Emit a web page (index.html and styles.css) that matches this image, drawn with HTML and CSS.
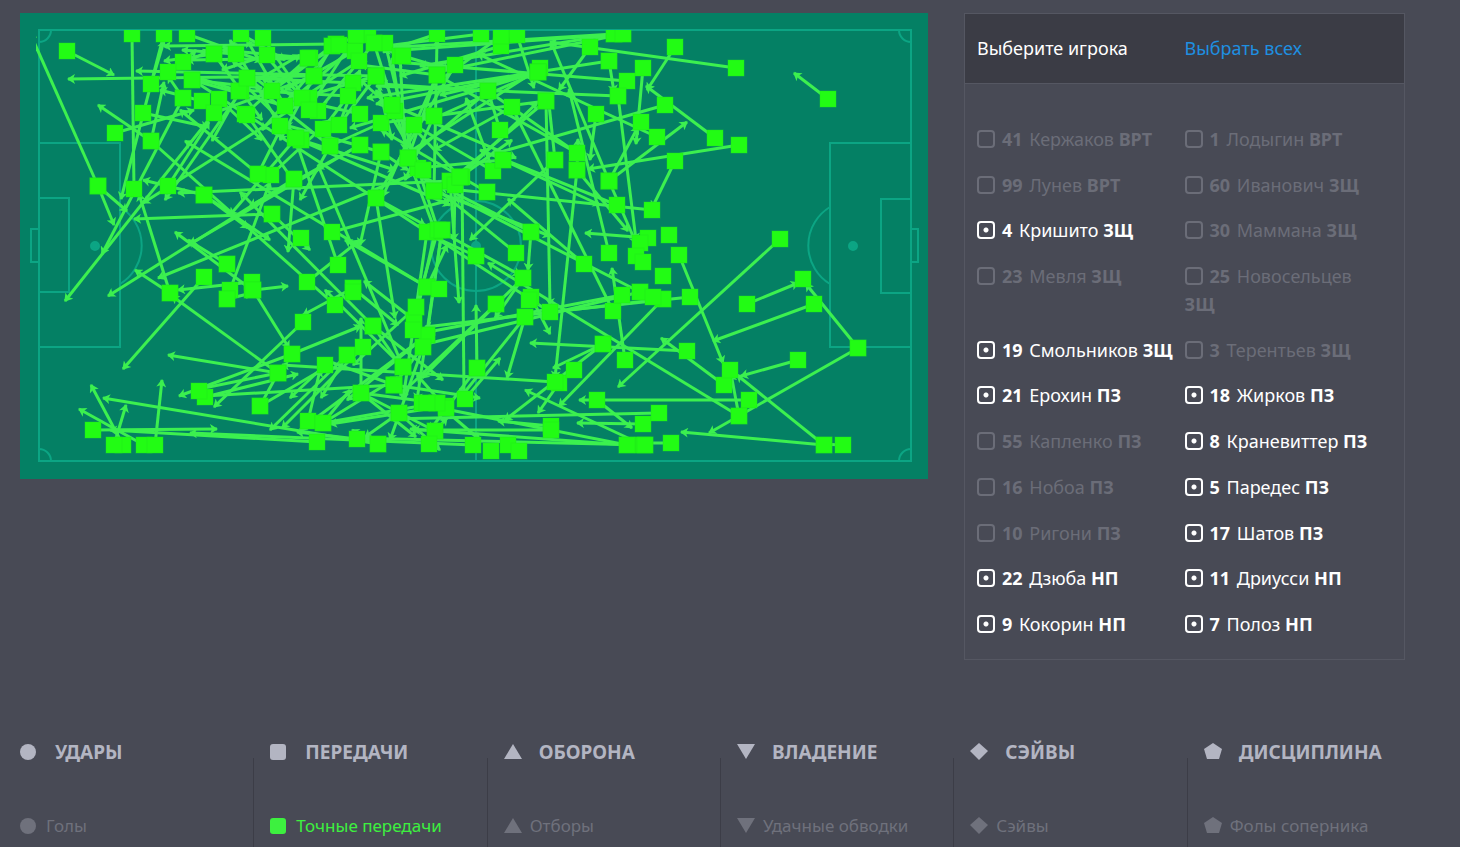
FILE: index.html
```html
<!DOCTYPE html>
<html lang="ru">
  <head>
    <meta charset="UTF-8" />
    <meta name="viewport" content="width=device-width, initial-scale=1.0" />
    <title>Точные передачи</title>
    <link rel="stylesheet" href="styles.css">
  </head>
  <body>

    <main class="match">
      <svg class="pitch" viewBox="20 13 908 466" role="img" aria-label="Карта передач">
        <defs>
          <clipPath id="field"><rect x="36" y="30" width="892" height="432" /></clipPath>
          <marker id="arrow" markerUnits="userSpaceOnUse" markerWidth="10" markerHeight="10" refX="8" refY="5" orient="auto">
            <path d="M1 0 L9 5 L1 10 L3 5 Z" fill="#3cf04f" />
          </marker>
        </defs>
        <g class="markings">
          <rect x="39" y="30" width="872" height="431" />
          <path d="M476 30V461" />
          <circle cx="476" cy="246" r="45" />
          <path d="M39 143H120V347H39M39 198H69V292H39M39 229H31V262H39" />
          <path d="M911 143H830V347H911M911 199H881V293H911M911 229H918V262H911" />
          <path d="M120 207A45 45 0 0 1 120 284M830 207A45 45 0 0 0 830 284" />
          <path d="M51 30A12 12 0 0 1 39 42M899 30A12 12 0 0 0 911 42M51 461A12 12 0 0 0 39 449M899 461A12 12 0 0 1 911 449" />
          <circle class="spot" cx="95" cy="246" r="4" />
          <circle class="spot" cx="476" cy="246" r="4" />
          <circle class="spot" cx="853" cy="246" r="4" />
        </g>
        <g id="passes" clip-path="url(#field)"></g>
      </svg>

      <section class="players">
        <header class="players-head">
          <h2>Выберите игрока</h2>
          <a href="#all">Выбрать всех</a>
        </header>
        <div class="players-list">
          <label><input type="checkbox"><b>41</b> Кержаков <b>ВРТ</b></label>
          <label><input type="checkbox"><b>1</b> Лодыгин <b>ВРТ</b></label>
          <label><input type="checkbox"><b>99</b> Лунев <b>ВРТ</b></label>
          <label><input type="checkbox"><b>60</b> Иванович <b>ЗЩ</b></label>
          <label><input type="checkbox" checked><b>4</b> Кришито <b>ЗЩ</b></label>
          <label><input type="checkbox"><b>30</b> Маммана <b>ЗЩ</b></label>
          <label><input type="checkbox"><b>23</b> Мевля <b>ЗЩ</b></label>
          <label><input type="checkbox"><b>25</b> Новосельцев <b>ЗЩ</b></label>
          <label><input type="checkbox" checked><b>19</b> Смольников <b>ЗЩ</b></label>
          <label><input type="checkbox"><b>3</b> Терентьев <b>ЗЩ</b></label>
          <label><input type="checkbox" checked><b>21</b> Ерохин <b>ПЗ</b></label>
          <label><input type="checkbox" checked><b>18</b> Жирков <b>ПЗ</b></label>
          <label><input type="checkbox"><b>55</b> Капленко <b>ПЗ</b></label>
          <label><input type="checkbox" checked><b>8</b> Краневиттер <b>ПЗ</b></label>
          <label><input type="checkbox"><b>16</b> Нобоа <b>ПЗ</b></label>
          <label><input type="checkbox" checked><b>5</b> Паредес <b>ПЗ</b></label>
          <label><input type="checkbox"><b>10</b> Ригони <b>ПЗ</b></label>
          <label><input type="checkbox" checked><b>17</b> Шатов <b>ПЗ</b></label>
          <label><input type="checkbox" checked><b>22</b> Дзюба <b>НП</b></label>
          <label><input type="checkbox" checked><b>11</b> Дриусси <b>НП</b></label>
          <label><input type="checkbox" checked><b>9</b> Кокорин <b>НП</b></label>
          <label><input type="checkbox" checked><b>7</b> Полоз <b>НП</b></label>
        </div>
      </section>
    </main>

    <nav class="legend">
      <div class="group">
        <h3><svg viewBox="0 0 18 18"><circle cx="8" cy="9" r="8" /></svg>УДАРЫ</h3>
        <button type="button"><svg viewBox="0 0 18 18"><circle cx="8" cy="9" r="8" /></svg>Голы</button>
      </div>
      <div class="group">
        <h3><svg viewBox="0 0 18 18"><rect y="1" width="16" height="16" rx="3" /></svg>ПЕРЕДАЧИ</h3>
        <button type="button" class="active"><svg viewBox="0 0 18 18"><rect y="1" width="16" height="16" rx="3" /></svg>Точные передачи</button>
      </div>
      <div class="group">
        <h3><svg viewBox="0 0 18 18"><path d="M9 1L18 16H0Z" /></svg>ОБОРОНА</h3>
        <button type="button"><svg viewBox="0 0 18 18"><path d="M9 1L18 16H0Z" /></svg>Отборы</button>
      </div>
      <div class="group">
        <h3><svg viewBox="0 0 18 18"><path d="M0 1H18L9 16Z" /></svg>ВЛАДЕНИЕ</h3>
        <button type="button"><svg viewBox="0 0 18 18"><path d="M0 1H18L9 16Z" /></svg>Удачные обводки</button>
      </div>
      <div class="group">
        <h3><svg viewBox="0 0 18 18"><path d="M9 0L18 8L9 17L0 8Z" /></svg>СЭЙВЫ</h3>
        <button type="button"><svg viewBox="0 0 18 18"><path d="M9 0L18 8L9 17L0 8Z" /></svg>Сэйвы</button>
      </div>
      <div class="group">
        <h3><svg viewBox="0 0 18 18"><path d="M9 0L18 6L15 16H3L0 6Z" /></svg>ДИСЦИПЛИНА</h3>
        <button type="button"><svg viewBox="0 0 18 18"><path d="M9 0L18 6L15 16H3L0 6Z" /></svg>Фолы соперника</button>
      </div>
    </nav>

    <script>
        // x1, y1 - start of the pass, x2, y2 - where it was received
        const passes = [
            [67,51,114,75], [132,34,134,190], [164,34,121,199], [187,34,262,61], [214,54,164,61],
            [241,34,285,60], [236,54,182,50], [183,62,196,50], [168,72,210,50], [151,84,164,41],
            [192,80,262,88], [183,98,168,76], [143,113,208,127], [115,133,194,110], [151,141,164,82],
            [202,101,160,90], [219,99,262,140], [214,113,65,301], [239,91,192,76], [245,114,185,75],
            [98,186,30,33], [98,186,114,225], [98,186,127,211], [183,98,102,254], [168,186,209,122],
            [204,195,248,228], [170,293,139,194], [314,76,68,79], [376,76,136,71], [247,78,212,141],
            [336,44,164,46], [151,141,98,105], [427,287,185,141], [335,305,151,141], [450,181,178,193],
            [272,214,134,219], [252,290,175,232], [309,98,143,203], [204,195,143,180], [360,145,190,244],
            [736,68,550,42], [828,99,794,73], [715,138,646,86], [739,145,588,169], [780,239,618,387],
            [747,304,798,283], [814,304,713,341], [858,348,709,433], [858,348,806,284], [739,416,488,263],
            [798,360,741,376], [749,400,579,400], [824,445,681,432], [824,445,737,375], [843,445,820,444],
            [739,416,731,374], [724,385,661,338], [679,255,723,363], [675,47,647,90], [643,68,636,144],
            [609,61,614,92], [618,96,636,240], [665,105,490,155], [657,137,478,54], [609,181,687,122],
            [609,181,638,127], [675,161,652,208], [652,210,440,188], [596,114,590,160], [590,47,559,90],
            [609,253,569,89], [609,181,551,42], [577,170,578,139], [577,170,628,231], [609,181,636,243],
            [584,264,508,199], [648,238,585,233], [613,311,512,107], [546,101,550,305], [555,160,548,95],
            [577,170,555,378], [617,205,480,150], [577,153,488,91], [517,35,534,88], [614,34,383,48],
            [623,34,388,51], [614,34,420,66], [623,34,437,72], [609,61,367,98], [627,81,396,62],
            [618,96,376,86], [493,171,466,98], [500,130,488,91], [460,177,537,103], [538,72,440,95],
            [540,68,400,158], [546,101,455,177], [538,72,430,120], [531,232,410,170], [516,253,420,175],
            [531,232,528,270], [531,297,550,334], [523,278,495,318], [523,278,422,378], [525,317,507,378],
            [525,317,460,398], [622,295,428,332], [640,292,418,346], [663,299,425,327], [690,297,550,312],
            [625,360,612,268], [663,299,559,406], [640,292,455,197], [687,351,530,343], [603,344,553,368],
            [559,383,538,413], [643,445,525,390], [597,400,632,428], [643,424,577,423], [659,413,390,419],
            [555,382,282,365], [551,426,498,421], [627,445,440,408], [627,445,410,429], [645,445,355,438],
            [671,443,645,443], [473,445,190,433], [378,444,103,398], [93,430,217,429], [317,442,110,430],
            [123,445,91,385], [144,445,79,409], [114,445,126,405], [155,445,162,380], [204,277,123,369],
            [292,354,179,396], [278,373,168,355], [303,322,214,407], [294,179,108,296], [423,170,158,278],
            [170,293,135,270], [278,373,172,296], [252,282,178,290], [230,290,270,182], [227,299,252,293],
            [253,290,288,286], [253,290,289,348], [353,288,303,315], [307,282,360,240], [373,326,240,192],
            [403,367,325,290], [353,288,398,325], [414,320,364,281], [373,326,443,380], [361,393,361,318],
            [292,354,361,326], [427,287,447,245], [438,230,416,307], [442,230,427,335], [435,232,413,330],
            [427,232,403,400], [442,230,417,400], [450,181,459,303], [455,185,454,240], [462,177,464,395],
            [477,368,476,305], [465,399,500,358], [325,365,290,398], [347,355,321,398], [347,355,270,430],
            [363,347,282,428], [394,385,205,396], [278,373,199,389], [205,397,298,374], [260,406,278,373],
            [260,406,325,368], [308,421,320,370], [323,423,350,390], [437,403,323,423], [446,406,330,424],
            [361,393,416,437], [435,431,361,393], [394,385,325,360], [437,403,361,393], [446,408,417,375],
            [323,423,398,377], [427,335,347,400], [357,439,297,432], [378,444,352,430], [399,413,365,437],
            [435,431,447,418], [551,430,413,430], [374,43,410,158], [385,43,415,165], [400,56,405,150],
            [434,191,437,40], [418,168,438,230], [408,158,434,228], [408,158,437,75], [381,152,360,245],
            [376,198,395,318], [403,367,318,165], [338,265,295,138], [294,179,288,252], [427,287,345,240],
            [550,312,247,115], [376,198,425,225], [332,232,450,200], [455,65,372,205], [434,116,405,180],
            [403,56,450,70], [437,34,383,52], [481,34,385,46], [501,46,400,76], [488,91,381,84],
            [512,107,434,150], [414,125,500,175], [381,123,330,146], [360,114,320,105], [339,125,360,70],
            [323,129,348,96], [330,146,300,200], [301,140,240,80], [280,126,230,40], [285,106,247,40],
            [318,111,262,78], [263,38,313,110], [267,55,222,70], [308,58,222,50], [332,46,272,91],
            [355,51,285,90], [359,61,290,106], [376,76,300,98], [353,83,247,78], [302,98,263,52],
            [272,91,232,60], [258,174,280,130], [271,175,330,120], [368,35,285,106], [336,44,262,130],
            [348,96,240,90], [356,35,308,110], [310,58,187,60], [395,111,360,80], [434,116,381,123],
            [503,160,418,168], [437,75,360,65], [460,177,512,140], [272,214,310,250], [381,152,408,170],
            [247,115,300,190], [241,91,165,200], [295,138,450,205], [501,36,440,80], [376,76,392,140],
            [392,105,516,158], [437,75,577,153], [538,72,376,104], [538,72,350,128], [488,91,408,158],
            [546,101,434,116], [408,158,392,58], [423,170,376,90], [460,177,392,105], [487,192,381,130],
            [301,140,395,170], [258,174,180,110], [330,146,247,80], [360,145,250,206], [381,152,285,125],
            [308,58,245,114], [332,46,302,98], [374,43,318,111], [356,35,263,90], [314,76,214,113],
            [214,54,262,120], [239,91,300,55], [192,80,285,106], [314,76,280,140], [376,76,339,125],
            [204,195,270,240], [227,264,188,240], [438,230,520,275], [434,191,550,236], [476,256,430,235],
            [423,347,390,440], [416,307,353,365], [427,335,300,430], [496,304,400,395], [437,403,480,440],
            [399,413,440,450], [394,385,480,398], [394,385,435,330], [373,326,400,365], [477,368,430,430],
            [603,344,505,420], [555,160,470,240], [503,160,600,205], [296,138,230,215], [437,75,383,196]
        ];

        // extra touches drawn without a line of their own
        const touches = [
            [134,189], [227,264], [227,299], [301,238], [442,230], [669,235], [663,276], [640,243],
            [636,256], [643,262], [653,297], [574,370], [730,370], [803,279], [491,451], [508,445],
            [519,451], [429,444], [422,403], [427,403], [496,304], [529,300], [414,320], [413,330],
            [423,347], [416,307], [439,289], [476,256], [487,192], [434,191], [392,105], [309,110],
            [339,45], [353,292], [199,391], [645,445], [641,122], [247,78], [403,367]
        ];

        const svgNS = "http://www.w3.org/2000/svg";
        const layer = document.getElementById("passes");

        function add(name, attrs) {
            const el = document.createElementNS(svgNS, name);
            Object.keys(attrs).forEach(function(key) {
                el.setAttribute(key, attrs[key]);
            });
            layer.appendChild(el);
        }

        passes.forEach(function(p) {
            add("line", { x1: p[0], y1: p[1], x2: p[2], y2: p[3], class: "pass" });
        });

        passes.concat(touches).forEach(function(p) {
            add("rect", { x: p[0] - 8, y: p[1] - 8, width: 16, height: 16, class: "touch" });
        });
    </script>

  </body>
</html>
```
FILE: styles.css
```css
* {
    box-sizing: border-box;
}

body {
    margin: 0;
    background: #484a55;
    color: #fff;
    font-family: "Noto Sans", "Open Sans", sans-serif;
    font-size: 18px;
    line-height: 28px;
}

h2, h3 {
    margin: 0;
    font-size: inherit;
}

.match {
    display: flex;
    align-items: flex-start;
    gap: 36px;
    padding: 13px 55px 0 20px;
}

.pitch {
    flex: 1;
    min-width: 0;
    background: #048064;
}

.markings {
    fill: none;
    stroke: #0ca584;
    stroke-width: 2;
}

.markings .spot {
    fill: #0ca584;
}

.pass {
    stroke: #3cf04f;
    stroke-width: 3;
    marker-end: url(#arrow);
}

.touch {
    fill: #22fc14;
    stroke: #1ee61c;
    stroke-width: 1;
    stroke-opacity: 0.4;
}

/* players */

.players {
    width: 441px;
    border: 1px solid #555762;
}

.players-head,
.players-list {
    display: grid;
    grid-template-columns: 1fr 1fr;
    column-gap: 8px;
    padding: 0 20px 0 12px;
}

.players-head {
    padding-top: 20px;
    padding-bottom: 21px;
    background: #3b3c45;
    border-bottom: 1px solid #555762;
}

.players-head h2 {
    font-weight: normal;
}

.players-head a {
    color: #1e8fe0;
    text-decoration: none;
}

.players-list {
    align-content: space-between;
    min-height: 575px;
    padding-top: 41px;
    padding-bottom: 21px;
}

.players-list label {
    color: #6b6d78;
}

.players-list label:has(:checked) {
    color: #fff;
}

.players-list input {
    appearance: none;
    width: 18px;
    height: 18px;
    margin: 0 7px 0 0;
    border: 2px solid currentColor;
    border-radius: 4px;
    color: inherit;
    vertical-align: -2px;
}

.players-list input:checked {
    background: radial-gradient(circle, #fff 2px, transparent 3px);
}

.players-list input + b {
    margin-right: 2px;
}

/* legend */

.legend {
    display: grid;
    grid-template-columns: repeat(6, 1fr);
    padding: 78px 40px 0 20px;
}

.group {
    height: 109px;
    padding-left: 17px;
    background: linear-gradient(#3c3d47, #3c3d47) no-repeat 0 20px / 1px 100%;
}

.group:first-child {
    padding-left: 0;
    background: none;
}

.group h3,
.group button {
    display: flex;
    align-items: center;
    color: #b3b5c2;
    white-space: nowrap;
}

.group h3 {
    font-size: 19px;
}

.group svg {
    width: 18px;
    height: 18px;
    margin-right: 8px;
    fill: currentColor;
}

.group h3 svg {
    margin-right: 17px;
}

.group button {
    margin-top: 46px;
    padding: 0;
    border: 0;
    background: none;
    color: #6f717c;
    font: inherit;
    font-size: 17px;
}

.group button.active {
    color: #3df03f;
}
```
